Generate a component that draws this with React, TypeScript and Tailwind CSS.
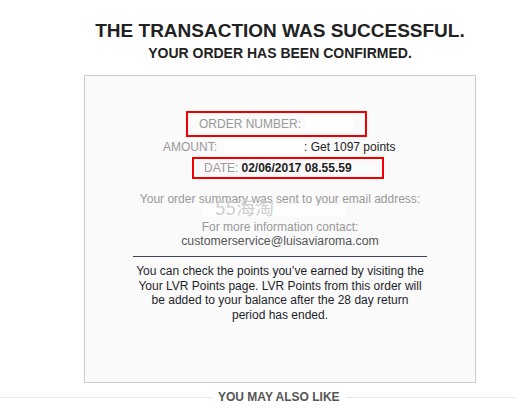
const labelCls = "text-[#999999]";

export default function App() {
  return (
    <div className="w-[516px] h-[410px] overflow-hidden bg-white font-['Liberation_Sans',Arial,sans-serif]">
      <div className="ml-[84px] w-[392px] pt-[20px]">
        <h1 className="text-center text-[19px] leading-[22px] font-bold text-[#222222] whitespace-nowrap">
          THE TRANSACTION WAS SUCCESSFUL.
        </h1>
        <h2 className="mt-[3px] text-center text-[14px] leading-[16px] font-bold text-[#222222]">
          YOUR ORDER HAS BEEN CONFIRMED.
        </h2>

        <div className="relative mt-[14px] h-[308px] border border-[#cccccc] bg-[#fafafa] text-[12px]">
          {/* order number */}
          <div className="mt-[35px] pl-[101px]">
            <div className="flex h-[26px] w-[181px] items-center border-2 border-[#ee0000] pl-[11px] leading-[16px]">
              <span className={labelCls}>ORDER NUMBER:</span>
              <span className="ml-[4px] h-[14px] w-[48px] bg-white" />
            </div>
          </div>

          {/* amount */}
          <div className="mt-[2px] flex items-center pl-[78px] leading-[16px]">
            <span className={labelCls}>AMOUNT:</span>
            <span className="ml-[7px] h-[14px] w-[80px] bg-white" />
            <span className="text-[#222222]">: Get 1097 points</span>
          </div>

          {/* date */}
          <div className="mt-[2px] pl-[107px]">
            <div className="flex h-[22px] w-[192px] items-center border-2 border-[#ee0000] pl-[10px] leading-[16px]">
              <span className={labelCls}>DATE:</span>
              <span className="ml-[3px] font-bold text-[#222222]">02/06/2017 08.55.59</span>
            </div>
          </div>

          <p className="mt-[13px] text-center leading-[14px] text-[#999999]">
            Your order summary was sent to your email address:
          </p>

          <div className="mt-[14px] text-center leading-[14px]">
            <p className="text-[#999999]">For more information contact:</p>
            <p className="text-[12.3px] text-[#555555]">customerservice@luisaviaroma.com</p>
          </div>

          <div className="mx-auto mt-[8px] h-px w-[294px] bg-[#3c4356]" />

          <p className="mt-[7px] text-center leading-[14.5px] text-[#1f1f2a]">
            You can check the points you’ve earned by visiting the
            <br />
            Your LVR Points page. LVR Points from this order will
            <br />
            be added to your balance after the 28 day return
            <br />
            period has ended.
          </p>

          {/* watermark */}
          <div className="absolute left-[118px] top-[129px] h-[12px] w-[142px] bg-white/70" />
          <span className="absolute left-[130px] top-[119px] text-[19px] leading-[24px] text-[#cfcfcf] font-['Noto_Sans_CJK_SC',sans-serif]">
            55海淘
          </span>
        </div>
      </div>

      <div className="mt-[6px] flex items-center">
        <div className="h-px w-[212px] bg-[#e8e8e8]" />
        <span className="px-[6px] text-[12px] leading-[16px] font-bold text-[#555555] whitespace-nowrap">
          YOU MAY ALSO LIKE
        </span>
        <div className="h-px flex-1 bg-[#e8e8e8]" />
      </div>
    </div>
  );
}
